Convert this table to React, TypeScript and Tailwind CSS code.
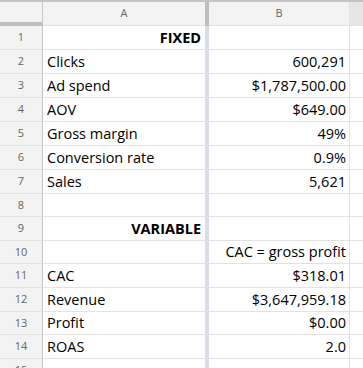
import React from 'react';

type Row = { a?: string; b?: string; bold?: boolean; short?: boolean };

const rows: Row[] = [
  { a: 'FIXED', bold: true },
  { a: 'Clicks', b: '600,291' },
  { a: 'Ad spend', b: '$1,787,500.00' },
  { a: 'AOV', b: '$649.00' },
  { a: 'Gross margin', b: '49%' },
  { a: 'Conversion rate', b: '0.9%' },
  { a: 'Sales', b: '5,621' },
  { short: true },
  { a: 'VARIABLE', bold: true },
  { b: 'CAC = gross profit', short: true },
  { a: 'CAC', b: '$318.01' },
  { a: 'Revenue', b: '$3,647,959.18' },
  { a: 'Profit', b: '$0.00', short: true },
  { a: 'ROAS', b: '2.0' },
  {},
];

const App: React.FC = () => {
  return (
    <div className="w-[363px] h-[368px] overflow-hidden bg-white text-[#222] font-['Open_Sans',sans-serif]">
      {/* column headers */}
      <div className="flex h-[26px] border-t-2 border-[#c4c4c4] bg-[#f3f3f3]">
        <div className="w-[43px] shrink-0 flex flex-col border-r border-[#c4c4c4]">
          <div className="flex-1" />
          <div className="h-[4px] bg-[#c0c0c0]" />
        </div>
        <div className="w-[162px] shrink-0 border-b border-[#e2e2e2] flex items-center justify-center text-[11px] text-[#666]">A</div>
        <div className="w-[4px] shrink-0 bg-[#bdbdbd]" />
        <div className="w-[141px] shrink-0 border-b border-r border-[#e2e2e2] flex items-center justify-center text-[11px] text-[#666]">B</div>
        <div className="flex-1 bg-[#e6e6e6] border-b border-[#e2e2e2]" />
      </div>

      {rows.map((r, i) => (
        <div key={i} className={r.short ? 'flex h-[23px] shrink-0' : 'flex h-[24px] shrink-0'}>
          <div className="w-[43px] shrink-0 bg-[#f3f3f3] border-r border-b border-r-[#c4c4c4] border-b-[#e2e2e2] flex items-center justify-center text-[11px] text-[#666]">
            {i + 1}
          </div>
          <div
            className={
              r.bold
                ? 'w-[162px] shrink-0 border-b border-[#e2e2e2] flex items-center justify-end pr-[4px] text-[14.5px] font-bold text-black'
                : 'w-[162px] shrink-0 border-b border-[#e2e2e2] flex items-center pl-[4px] text-[14.5px] text-black'
            }
          >
            {r.a}
          </div>
          <div className="w-[4px] shrink-0 bg-[#d9dce9]" />
          <div className="w-[141px] shrink-0 border-b border-r border-[#e2e2e2] flex items-center justify-end pr-[3px] text-[14.5px] text-black whitespace-nowrap">
            {r.b}
          </div>
          <div className="flex-1 border-b border-[#e2e2e2]" />
        </div>
      ))}
    </div>
  );
};

export default App;
